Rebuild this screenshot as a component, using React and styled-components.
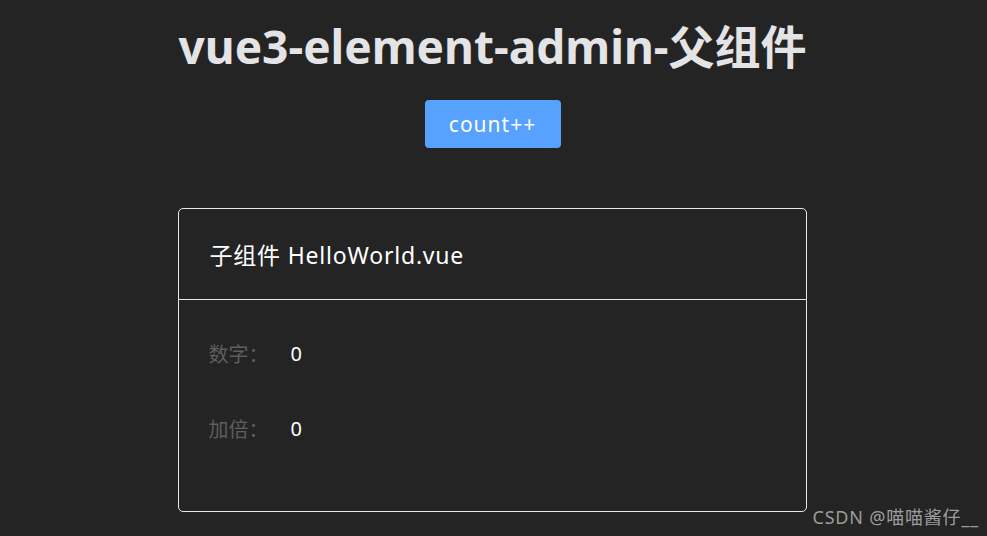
import React, { useState } from 'react';
import styled, { createGlobalStyle } from 'styled-components';

const GlobalStyle = createGlobalStyle`
    html, body {
        margin: 0;
        padding: 0;
        background: #242424;
        font-family: "Noto Sans", "Noto Sans CJK SC", sans-serif;
    }
`

const Page = styled.div`
    width: 987px;
    height: 536px;
    background: #242424;
    display: flex;
    flex-direction: column;
    align-items: center;
    position: relative;
    overflow: hidden;
`

const Title = styled.h1`
    margin: 16px 2px 0 0;
    font-size: 46px;
    line-height: 60px;
    font-weight: 700;
    color: #e4e4e6;
    letter-spacing: 0px;
`

const CountButton = styled.button`
    margin: 24px 2px 0 0;
    width: 136px;
    height: 48px;
    border: none;
    border-radius: 4px;
    background: #58a2ff;
    color: #ffffff;
    font-family: "Noto Sans", "Noto Sans CJK SC", sans-serif;
    font-size: 21px;
    letter-spacing: 1px;
    cursor: pointer;
`

const Card = styled.div`
    margin: 60px 3px 0 0;
    width: 627px;
    border: 1px solid #e8e8e8;
    border-radius: 5px;
    color: #ffffff;
`

const CardHeader = styled.div`
    height: 90px;
    padding: 0 31px;
    display: flex;
    align-items: center;
    border-bottom: 1px solid #e8e8e8;
    font-size: 23px;
    letter-spacing: 0.8px;
`

const CardBody = styled.div`
    padding: 38px 30px 0 30px;
    height: 173px;
    display: flex;
    flex-direction: column;
    gap: 45px;
`

const Row = styled.div`
    display: flex;
    align-items: center;
    height: 30px;
    font-size: 20px;
`

const Label = styled.span`
    width: 82px;
    color: #5e5e5e;
`

const Value = styled.span`
    color: #ffffff;
`

const Watermark = styled.div`
    position: absolute;
    right: 8px;
    bottom: 7px;
    font-size: 18px;
    letter-spacing: 0.8px;
    color: rgba(210, 210, 210, 0.7);
`

function App() {
    const [count, setCount] = useState(0);
    return (
        <Page>
            <GlobalStyle />
            <Title>vue3-element-admin-父组件</Title>
            <CountButton onClick={() => setCount(count + 1)}>count++</CountButton>
            <Card>
                <CardHeader>子组件 HelloWorld.vue</CardHeader>
                <CardBody>
                    <Row><Label>数字：</Label><Value>{count}</Value></Row>
                    <Row><Label>加倍：</Label><Value>{count * 2}</Value></Row>
                </CardBody>
            </Card>
            <Watermark>CSDN @喵喵酱仔__</Watermark>
        </Page>
    );
}

export default App;
